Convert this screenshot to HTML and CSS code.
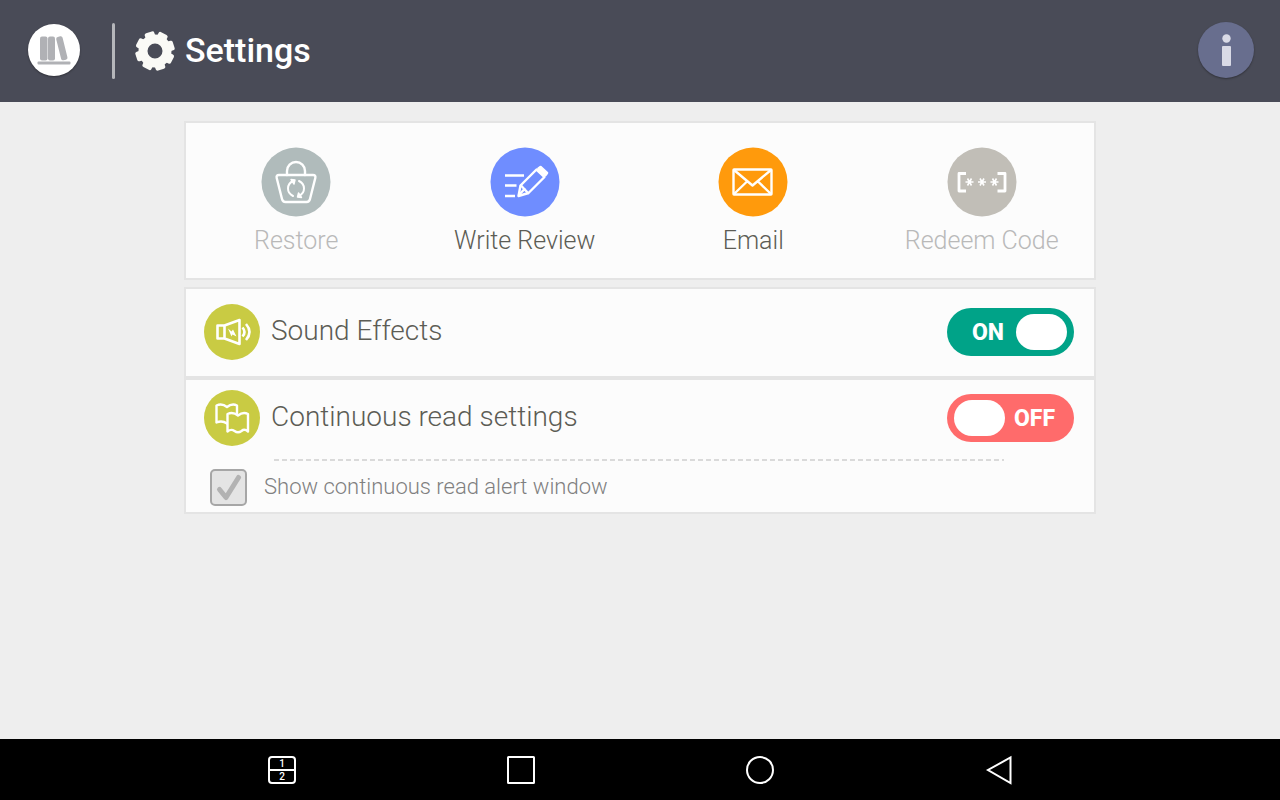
FILE: index.html
```html
<!DOCTYPE html>
<html lang="en">
  <head>
    <meta charset="UTF-8" />
    <meta name="viewport" content="width=device-width, initial-scale=1.0" />
    <title>Settings</title>
    <link rel="stylesheet" href="styles.css">
  </head>
  <body>
    <header class="topbar">
      <button class="round-btn library" aria-label="Library">
        <svg width="52" height="52" viewBox="0 0 52 52" fill="#b0b1b5">
          <rect x="12" y="12.500" width="7.500" height="24" rx="2" />
          <rect x="20" y="12.500" width="7" height="24" rx="2" />
          <rect x="30.500" y="12.500" width="6.500" height="24" rx="2" transform="rotate(-14 33 24)" />
          <rect x="9.500" y="37.500" width="33" height="3" rx="1" />
        </svg>
      </button>
      <span class="divider"></span>
      <svg class="gear" width="40" height="40" viewBox="-20 -20 40 40" fill="#fafaf6">
        <circle r="12" fill="none" stroke="#fafaf6" stroke-width="9" />
        <g transform="rotate(-18)">
          <rect x="-5" y="-19.6" width="10" height="8" rx="2" />
          <rect x="-5" y="-19.6" width="10" height="8" rx="2" transform="rotate(45)" />
          <rect x="-5" y="-19.6" width="10" height="8" rx="2" transform="rotate(90)" />
          <rect x="-5" y="-19.6" width="10" height="8" rx="2" transform="rotate(135)" />
          <rect x="-5" y="-19.6" width="10" height="8" rx="2" transform="rotate(180)" />
          <rect x="-5" y="-19.6" width="10" height="8" rx="2" transform="rotate(225)" />
          <rect x="-5" y="-19.6" width="10" height="8" rx="2" transform="rotate(270)" />
          <rect x="-5" y="-19.6" width="10" height="8" rx="2" transform="rotate(315)" />
        </g>
      </svg>
      <h1>Settings</h1>
      <button class="round-btn info" aria-label="Information">
        <svg width="56" height="56" viewBox="0 0 56 56" fill="#d9dae6">
          <circle cx="28.500" cy="16.500" r="4.200" />
          <rect x="24" y="24" width="9" height="20" rx="1" />
        </svg>
      </button>
    </header>

    <main>
      <section class="card tools">
        <button class="tool" disabled>
          <svg width="70" height="70" viewBox="0 0 70 70" fill="none" stroke="#fff" stroke-width="2.4" stroke-linejoin="round" stroke-linecap="round">
            <circle cx="35" cy="35" r="34.5" fill="#b0bbbb" stroke="none" />
            <path d="M26 28v-4a9 9 0 0 1 18 0v4" />
            <path d="M18 28h34q3 0 2.300 3l-5.300 21q-.7 3-3.500 3h-21q-2.800 0-3.500-3l-5.300-21q-.7-3 2.300-3z" />
            <path d="M32 34q-5 2.500-5 7.500 0 5 5 7.500M38 49q5-2.500 5-7.500 0-5-5-7.500" stroke-width="2" />
            <path d="M30 32.500l4 .5-1 4zM40.500 50.500l-4-.5 1-4z" fill="#fff" stroke-width="1.400" />
          </svg>
          <span>Restore</span>
        </button>
        <button class="tool">
          <svg width="70" height="70" viewBox="0 0 70 70" fill="none" stroke="#fff" stroke-width="2.4" stroke-linejoin="round" stroke-linecap="round">
            <circle cx="35" cy="35" r="34.5" fill="#6f8dff" stroke="none" />
            <path d="M15 28.500h19M15 38.500h11.500M15 49h10" stroke-linecap="butt" />
            <path d="M28.500 49l2-10.500 16-16 8 7.500-16 16z" />
            <path d="M31 38.500l7 7.500M34.500 42l-5.500 6" />
            <path d="M48.500 21.500l2-1.500 6.500 6-1.500 2z" fill="#fff" stroke-width="2.6" />
          </svg>
          <span>Write Review</span>
        </button>
        <button class="tool">
          <svg width="70" height="70" viewBox="0 0 70 70" fill="none" stroke="#fff" stroke-width="2.4" stroke-linejoin="round">
            <circle cx="35" cy="35" r="34.5" fill="#ff9a0c" stroke="none" />
            <rect x="15.500" y="22.500" width="38" height="25" rx=".5" />
            <path d="M16 23l18.500 15.500L53 23M16 47l13-12.500M53 47L40 34.500" />
          </svg>
          <span>Email</span>
        </button>
        <button class="tool" disabled>
          <svg width="70" height="70" viewBox="0 0 70 70" fill="none" stroke="#fff" stroke-width="2.8" stroke-linejoin="round">
            <circle cx="35" cy="35" r="34.5" fill="#c1beb7" stroke="none" />
            <path d="M19 26.500h-7v17.500h7M50.500 26.500h7.500v17.500h-7.500" />
            <g stroke-width="1.600">
              <path d="M18.500 35h8M20.500 31.500l4 7M24.500 31.500l-4 7" />
              <path d="M31 35h8M33 31.500l4 7M37 31.500l-4 7" />
              <path d="M43.500 35h8M45.500 31.500l4 7M49.500 31.500l-4 7" />
            </g>
          </svg>
          <span>Redeem Code</span>
        </button>
      </section>

      <section class="card sound">
        <div class="row">
          <svg width="56" height="56" viewBox="0 0 56 56" fill="none" stroke="#fff" stroke-width="2.6" stroke-linejoin="round">
            <circle cx="28" cy="28" r="28" fill="#c9cb43" stroke="none" />
            <path d="M13.500 21.500h7v13h-7zM20.500 21.500l15-5.500v24l-15-5.500z" />
            <path d="M24 24.500l3.500 3 1.500-2 3.500 7-4-2-1 2z" fill="#fff" stroke="none" />
            <path d="M38.500 23.500q4 4.500 0 9M42 20q7 8 0 16" />
          </svg>
          <label class="name" for="sound">Sound Effects</label>
          <span class="toggle">
            <input type="checkbox" role="switch" id="sound" checked>
            <span class="face"><b>ON</b><i class="knob"></i></span>
          </span>
        </div>
      </section>

      <section class="card reading">
        <div class="row">
          <svg width="56" height="56" viewBox="0 0 56 56" fill="#c9cb43" stroke="#fff" stroke-width="2.4" stroke-linejoin="round">
            <circle cx="28" cy="28" r="28" stroke="none" />
            <path d="M12.500 15.500q5.500-2.500 10.500 1.500 5-4 10-1.500v17q-5-2-10 1-5-3.500-10.500-1z" />
            <path d="M23.500 24q5.500-2.500 10.500 1.500 5-4 10-1.500v17.500q-3.500-3-6.500-.5-3.500 2.500-7 0-3.500-2.500-7 .5z" />
          </svg>
          <label class="name" for="continuous">Continuous read settings</label>
          <span class="toggle">
            <input type="checkbox" role="switch" id="continuous">
            <span class="face"><i class="knob"></i><b>OFF</b></span>
          </span>
        </div>
        <div class="dashes"></div>
        <div class="option">
          <span class="check">
            <input type="checkbox" id="alert" checked disabled>
            <svg width="37" height="37" viewBox="0 0 37 37" fill="none" stroke="#b2b2b2" stroke-width="5" stroke-linecap="round" stroke-linejoin="round">
              <path d="M9.500 20.500l6.500 8L28.500 8.500" />
            </svg>
          </span>
          <label for="alert">Show continuous read alert window</label>
        </div>
      </section>
    </main>

    <nav class="navbar">
      <div class="keys">
        <button aria-label="Split screen">
          <svg width="30" height="30" viewBox="0 0 30 30" fill="none" stroke="#fff" stroke-width="2">
            <rect x="2" y="2" width="26" height="26" rx="3" />
            <path d="M2 15h26" />
            <text x="15" y="12" class="digit">1</text>
            <text x="15" y="25" class="digit">2</text>
          </svg>
        </button>
        <button aria-label="Recent apps">
          <svg width="30" height="30" viewBox="0 0 30 30" fill="none" stroke="#fff" stroke-width="2">
            <rect x="2" y="2" width="26" height="26" rx=".5" />
          </svg>
        </button>
        <button aria-label="Home">
          <svg width="30" height="30" viewBox="0 0 30 30" fill="none" stroke="#fff" stroke-width="2">
            <circle cx="15" cy="15" r="13" />
          </svg>
        </button>
        <button aria-label="Back">
          <svg width="30" height="30" viewBox="0 0 30 30" fill="none" stroke="#fff" stroke-width="2">
            <path d="M26.500 2.500v25.500L4 15z" />
          </svg>
        </button>
      </div>
    </nav>
  </body>
</html>
```

FILE: styles.css
```css
* {
  box-sizing: border-box;
}
body {
  margin: 0;
  min-height: 100vh;
  display: flex;
  flex-direction: column;
  background: #eeeeee;
  color: #5c5c55;
  font-family: Roboto, Arial, sans-serif;
  font-weight: 300;
}
button {
  padding: 0;
  border: none;
  background: none;
  font: inherit;
  color: inherit;
  cursor: pointer;
}
svg {
  display: block;
  flex: none;
}

/* top bar */
.topbar {
  display: flex;
  align-items: center;
  padding: 21px 26px 23px 28px;
  min-height: 102px;
  background: #494b57;
}
.round-btn {
  border-radius: 50%;
  box-shadow: 0 1px 2px rgba(0, 0, 0, 0.35);
}
.library {
  background: #fff;
}
.info {
  margin-left: auto;
  background: #686e8e;
}
.divider {
  width: 3px;
  height: 56px;
  margin: 2px 20px 0 32px;
  border-radius: 2px;
  background: #b5b6ba;
}
.gear {
  margin-top: 2px;
}
h1 {
  margin: 0 0 0 10px;
  font-size: 34px;
  line-height: 40px;
  font-weight: 500;
  color: #fff;
}

/* cards */
main {
  flex: 1;
  width: 100%;
  max-width: 912px;
  margin: 0 auto;
  padding: 19px 0;
}
.card {
  border: 2px solid #e4e4e4;
  background: #fcfcfc;
}
.tools {
  display: grid;
  grid-template-columns: repeat(4, 1fr);
  column-gap: 8px;
  padding: 24px 2px 20px 0;
  margin-bottom: 7px;
}
.tool {
  display: flex;
  flex-direction: column;
  align-items: center;
  gap: 7px;
  font-size: 25px;
  line-height: 34px;
}
.tool:disabled {
  color: #b9b9b9;
  cursor: default;
}
.row {
  display: flex;
  align-items: center;
  padding: 0 20px 0 18px;
}
.name {
  flex: 1;
  padding: 0 0 2px 11px;
  font-size: 28px;
  line-height: 34px;
}
.sound {
  padding: 15px 0 16px;
}
.reading {
  padding: 10px 0 6px;
}

/* on/off switches */
.toggle,
.check {
  display: grid;
}
.toggle > *,
.check > * {
  grid-area: 1 / 1;
}
.toggle input {
  appearance: none;
  width: 127px;
  height: 48px;
  margin: 0;
  border-radius: 24px;
  background: #ff6b6b;
  cursor: pointer;
}
.toggle input:checked {
  background: #00a388;
}
.face {
  display: flex;
  align-items: center;
  justify-content: space-between;
  padding: 0 7px;
  pointer-events: none;
}
.face b {
  flex: 1;
  padding: 2px 12px 0 0;
  text-align: right;
  font-size: 23px;
  line-height: 28px;
  font-weight: 800;
  color: #fff;
}
.knob {
  width: 51px;
  height: 36px;
  border-radius: 18px;
  background: #fff;
}

.dashes {
  height: 2px;
  margin: 13px 90px 8px 88px;
  background: repeating-linear-gradient(90deg, #dadada 0 5px, transparent 5px 8px);
}
.option {
  display: flex;
  align-items: center;
  gap: 17px;
  padding-left: 24px;
  font-size: 22px;
  line-height: 30px;
  color: #808080;
}
.option label {
  padding-bottom: 2px;
}
.check input {
  appearance: none;
  width: 37px;
  height: 37px;
  margin: 0;
  border: 2px solid #a6a6a6;
  border-radius: 5px;
  background: #e4e4e4;
}
.check svg {
  pointer-events: none;
}

/* system keys */
.navbar {
  padding: 16px 0 15px;
  background: #000;
}
.keys {
  display: grid;
  grid-template-columns: repeat(4, 1fr);
  justify-items: center;
  max-width: 956px;
  margin: 0 auto;
}
.digit {
  fill: #fff;
  stroke: none;
  font-size: 10px;
  font-weight: 500;
  text-anchor: middle;
}
```
